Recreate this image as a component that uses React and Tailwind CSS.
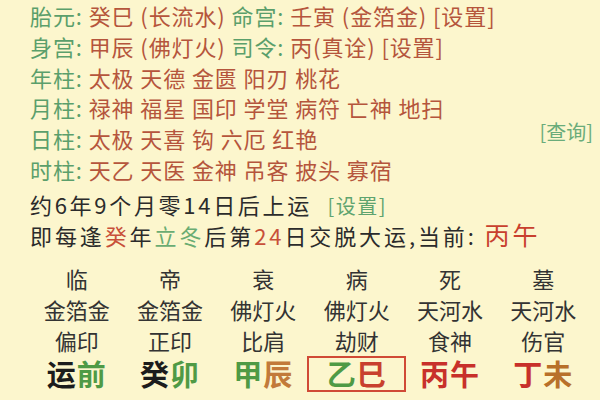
import React from 'react';

const G = 'text-[#5b9f6b]';
const R = 'text-[#b5553c]';

const rows = [
  { label: '年柱', items: ['太极', '天德', '金匮', '阳刃', '桃花'] },
  { label: '月柱', items: ['禄神', '福星', '国印', '学堂', '病符', '亡神', '地扫'] },
  { label: '日柱', items: ['太极', '天喜', '钩', '六厄', '红艳'] },
  { label: '时柱', items: ['天乙', '天医', '金神', '吊客', '披头', '寡宿'] },
];

const cols = [
  { a: '临', b: '金箔金', c: '偏印', d: [['运', 'text-[#1c1c1c]'], ['前', 'text-[#4f9a45]']] },
  { a: '帝', b: '金箔金', c: '正印', d: [['癸', 'text-[#1c1c1c]'], ['卯', 'text-[#4f9a45]']] },
  { a: '衰', b: '佛灯火', c: '比肩', d: [['甲', 'text-[#4f9a45]'], ['辰', 'text-[#c27a3a]']] },
  { a: '病', b: '佛灯火', c: '劫财', d: [['乙', 'text-[#4f9a45]'], ['巳', 'text-[#c8402e]']], boxed: true },
  { a: '死', b: '天河水', c: '食神', d: [['丙', 'text-[#c8302a]'], ['午', 'text-[#c8302a]']] },
  { a: '墓', b: '天河水', c: '伤官', d: [['丁', 'text-[#c8302a]'], ['未', 'text-[#b8702a]']] },
];

const Label = ({ children }) => <span className={G}>{children}: </span>;

export default function App() {
  return (
    <div
      className="w-[600px] h-[400px] overflow-hidden bg-[#fcf6cd] relative"
      style={{ fontFamily: '"Noto Sans CJK SC", "Noto Sans", sans-serif' }}
    >
      <div className="pl-[30px] text-[22px] leading-[30.8px] tracking-[0.9px] whitespace-nowrap">
        <div>
          <Label>胎元</Label>
          <span className={R}>癸巳 (长流水) </span>
          <Label>命宫</Label>
          <span className={R}>壬寅 (金箔金) [设置]</span>
        </div>
        <div>
          <Label>身宫</Label>
          <span className={R}>甲辰 (佛灯火) </span>
          <Label>司令</Label>
          <span className={R}>丙(真诠) [设置]</span>
        </div>
        {rows.map((r) => (
          <div key={r.label}>
            <Label>{r.label}</Label>
            <span className={R}>{r.items.join(' ')}</span>
          </div>
        ))}
        <div className="mt-[5px] text-[#2b2b2b] leading-[28px] tracking-[2.7px]">
          约6年9个月零14日后上运 <span className="ml-[8px] text-[20px] text-[#5fa46f] tracking-[1.5px]">[设置]</span>
        </div>
        <div className="text-[#2b2b2b] leading-[28px] tracking-[2.9px]">
          即每逢<span className="text-[#c8503a]">癸</span>年<span className="text-[#6aac72]">立冬</span>后第<span className="text-[#c8503a]">24</span>日交脱大运,当前: <span className="text-[25px] text-[#c8402e]">丙午</span>
        </div>
      </div>

      <div className="absolute right-[7px] top-[117px] text-[20px] text-[#6aac7a]">
        [查询]
      </div>

      <div className="grid grid-cols-6 ml-[30px] w-[560px] mt-[14px] text-[#333] text-[22px] text-center">
        {cols.map((c, i) => (
          <div key={i} className="flex flex-col items-center">
            <div className="leading-[31px]">{c.a}</div>
            <div className="leading-[31px]">{c.b}</div>
            <div className="leading-[31px]">{c.c}</div>
            <div
              className={
                'w-[99px] h-[36px] flex items-center justify-center text-[29px] font-bold leading-none tracking-[1px] ' +
                (c.boxed ? 'border-2 border-[#d04a36]' : 'border-2 border-transparent')
              }
            >
              {c.d.map(([t, cl]) => (
                <span key={t} className={cl}>{t}</span>
              ))}
            </div>
          </div>
        ))}
      </div>
    </div>
  );
}
